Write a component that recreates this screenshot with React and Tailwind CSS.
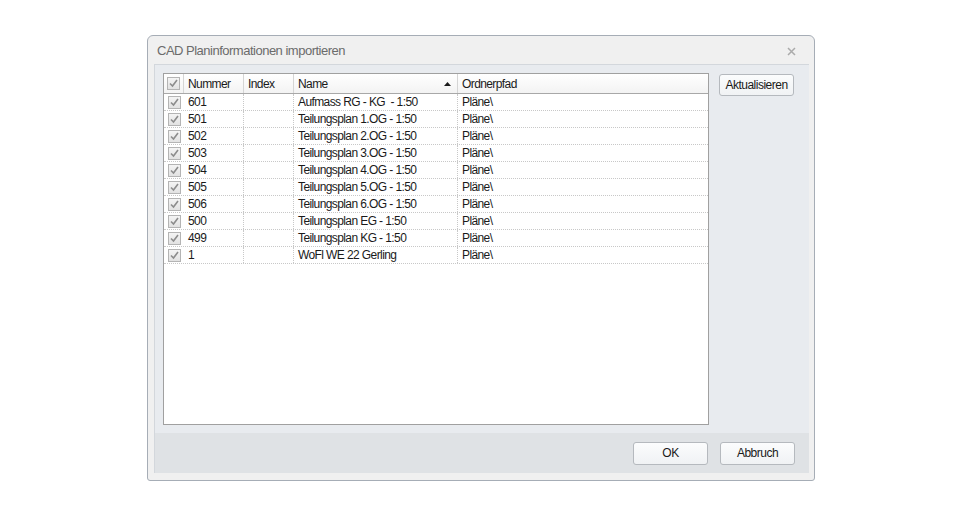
const rows = [
	["601", "", "Aufmass RG - KG  - 1:50", "Pläne\\"],
	["501", "", "Teilungsplan 1.OG - 1:50", "Pläne\\"],
	["502", "", "Teilungsplan 2.OG - 1:50", "Pläne\\"],
	["503", "", "Teilungsplan 3.OG - 1:50", "Pläne\\"],
	["504", "", "Teilungsplan 4.OG - 1:50", "Pläne\\"],
	["505", "", "Teilungsplan 5.OG - 1:50", "Pläne\\"],
	["506", "", "Teilungsplan 6.OG - 1:50", "Pläne\\"],
	["500", "", "Teilungsplan EG - 1:50", "Pläne\\"],
	["499", "", "Teilungsplan KG - 1:50", "Pläne\\"],
	["1", "", "WoFl WE 22 Gerling", "Pläne\\"],
];

const Check = () => {
	return (
		<div className="w-[13px] h-[13px] border border-[#b4b4b4] bg-gradient-to-b from-[#f4f4f4] to-[#e2e2e2] flex items-center justify-center">
			<svg width="11" height="11" viewBox="0 0 11 11">
				<path d="M2 5.5 L4.5 8 L9 2" fill="none" stroke="#8c8c8c" strokeWidth="1.6" />
			</svg>
		</div>
	);
};

const Button = (props) => {
	return (
		<div className="w-[75px] h-[23px] rounded-[3px] border border-[#b5b9be] bg-gradient-to-b from-[#fbfcfd] to-[#f0f2f4] flex items-center justify-center text-[12px] tracking-[-0.5px] text-[#1a1a1a]">
			{props.label}
		</div>
	);
};

const App = () => {
	return (
		<div className="w-[960px] h-[514px] bg-white pt-[35px] pl-[147px]" style={{ fontFamily: '"Liberation Sans", Arial, sans-serif' }}>
			<div className="w-[668px] h-[446px] border border-[#a6adb6] rounded-t-[6px] rounded-b-[3px] bg-[#f0f0f0] flex flex-col">
				{/* title bar */}
				<div className="h-[28px] shrink-0 flex items-center justify-between pl-[9px] pr-[18px] pt-[2px]">
					<span className="text-[13px] tracking-[-0.5px] text-[#6b6b6b]">CAD Planinformationen importieren</span>
					<svg width="9" height="9" viewBox="0 0 9 9">
						<path d="M1 1 L8 8 M8 1 L1 8" stroke="#ababab" strokeWidth="1.5" />
					</svg>
				</div>

				<div className="flex-1 ml-[6px] mr-[5px] border-t border-l border-[#d3d7dc] bg-[#e8ebef] flex flex-col">
					<div className="flex-1 flex pt-[8px] pl-[8px]">
						{/* grid */}
						<div className="w-[546px] h-[352px] border border-[#a0a0a0] bg-white text-[12px] tracking-[-0.6px] text-[#1a1a1a]">
							<div className="h-[20px] flex border-b border-[#a8a8a8] bg-gradient-to-b from-white to-[#f3f3f3]">
								<div className="w-[20px] flex items-center justify-center border-r border-[#d5d5d5]">
									<Check />
								</div>
								<div className="w-[60px] pl-[4px] pt-[1px] flex items-center border-r border-[#d5d5d5]">Nummer</div>
								<div className="w-[50px] pl-[4px] pt-[1px] flex items-center border-r border-[#d5d5d5]">Index</div>
								<div className="w-[164px] pl-[4px] pr-[6px] pt-[1px] flex items-center justify-between border-r border-[#d5d5d5]">
									<span>Name</span>
									<svg width="7" height="4" viewBox="0 0 7 4">
										<path d="M0 4 L3.5 0 L7 4 Z" fill="#1a1a1a" />
									</svg>
								</div>
								<div className="flex-1 pl-[4px] pt-[1px] flex items-center">Ordnerpfad</div>
							</div>
							{rows.map((row) => {
								return (
									<div key={row[0]} className="h-[17px] flex border-b border-dotted border-[#c8c8c8]">
										<div className="w-[20px] flex items-center justify-center">
											<Check />
										</div>
										<div className="w-[60px] pl-[4px] flex items-center border-r border-dotted border-[#c8c8c8]">{row[0]}</div>
										<div className="w-[50px] pl-[4px] flex items-center border-r border-dotted border-[#c8c8c8]">{row[1]}</div>
										<div className="w-[164px] pl-[4px] flex items-center border-r border-dotted border-[#c8c8c8] whitespace-pre">{row[2]}</div>
										<div className="flex-1 pl-[4px] flex items-center">{row[3]}</div>
									</div>
								);
							})}
						</div>
						<div className="ml-[10px] mt-[1px]">
							<div className="w-[75px] h-[22px] rounded-[3px] border border-[#b5b9be] bg-gradient-to-b from-[#fbfcfd] to-[#f0f2f4] flex items-center justify-center text-[12px] tracking-[-0.5px] text-[#1a1a1a]">
								Aktualisieren
							</div>
						</div>
					</div>

					{/* footer */}
					<div className="h-[40px] shrink-0 bg-[#dfe2e5] flex items-center justify-end gap-[12px] pr-[14px]">
						<Button label="OK" />
						<Button label="Abbruch" />
					</div>
				</div>
				<div className="h-[7px] shrink-0" />
			</div>
		</div>
	);
};

export default App;
